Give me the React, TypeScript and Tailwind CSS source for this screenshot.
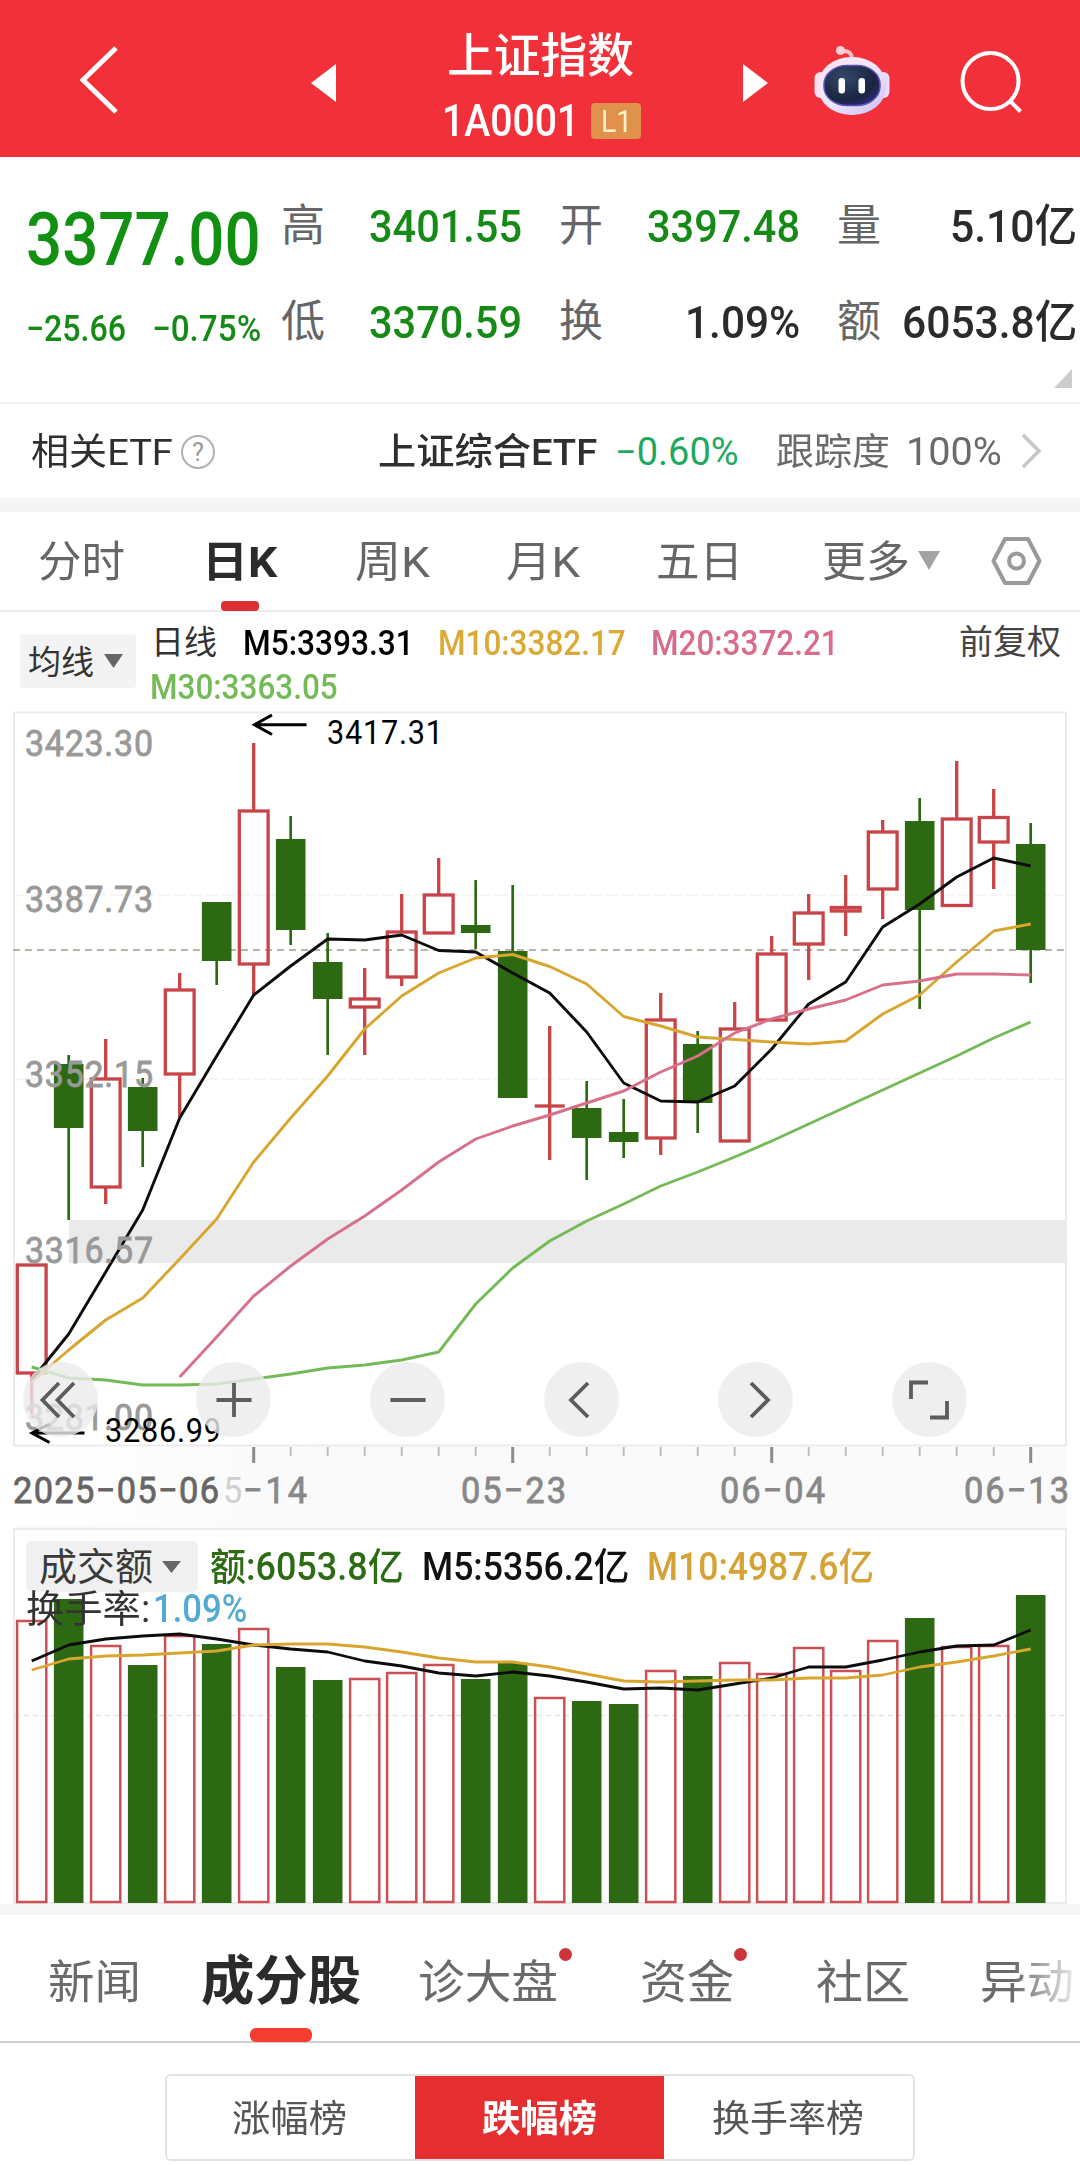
import React, { useLayoutEffect, useRef, useState } from "react";

/** Single line of text, condensed or widened to fill the width of its box. */
function Fit({ className, children }: { className: string; children: React.ReactNode }) {
  const box = useRef<HTMLDivElement>(null);
  const inner = useRef<HTMLSpanElement>(null);
  const [scale, setScale] = useState(1);
  useLayoutEffect(() => {
    if (box.current && inner.current) {
      setScale(box.current.clientWidth / inner.current.offsetWidth);
    }
  }, []);
  return (
    <div ref={box} className={"shrink-0 leading-none " + className}>
      <span ref={inner} className="inline-block origin-left whitespace-nowrap align-top" style={{ transform: `scaleX(${scale})` }}>
        {children}
      </span>
    </div>
  );
}

const UP = "#c94448";
const DOWN = "#2d6812";
const X0 = 31.7;
const STEP = 37;
const cx = (i: number) => X0 + STEP * i;

// [rising, high, bodyTop, bodyBottom, low]
const candles: [number, number, number, number, number][] = [
  [1, 1265, 1265, 1373, 1414],
  [0, 1055, 1064, 1128, 1220],
  [1, 1039, 1079, 1187, 1204],
  [0, 1078, 1087, 1131, 1167],
  [1, 973, 990, 1074, 1117],
  [0, 902, 902, 961, 985],
  [1, 743, 811, 964, 995],
  [0, 816, 839, 930, 945],
  [0, 933, 962, 999, 1055],
  [1, 968, 999, 1007, 1055],
  [1, 894, 932, 977, 986],
  [1, 858, 895, 933, 933],
  [0, 880, 925, 933, 949],
  [0, 885, 951, 1098, 1098],
  [1, 1026, 1106, 1106, 1160],
  [0, 1081, 1108, 1138, 1180],
  [0, 1099, 1132, 1142, 1158],
  [1, 993, 1020, 1138, 1155],
  [0, 1031, 1044, 1103, 1133],
  [1, 1002, 1029, 1141, 1141],
  [1, 936, 954, 1020, 1020],
  [1, 894, 913, 944, 980],
  [1, 875, 907.5, 911, 936],
  [1, 820, 832, 889, 919],
  [0, 798, 821, 910, 1009],
  [1, 761, 819, 905.5, 905.5],
  [1, 789, 817.5, 842, 889],
  [0, 823, 844, 950, 983],
];

const ma5 = [1380, 1334, 1272, 1210, 1118, 1056, 995, 966, 939, 940, 935, 950.5, 952, 973, 993, 1032, 1083, 1101, 1102, 1086, 1049, 1004, 982, 927, 904, 877, 858, 866];
const ma10 = [1382, 1350, 1320, 1298, 1259, 1219, 1162, 1118, 1076, 1029, 996, 973, 958, 954.5, 966.5, 984, 1016.5, 1026, 1037, 1039.5, 1042, 1044, 1041, 1014, 995, 962, 931, 924];
const ma20 = [1377, 1337, 1296, 1266, 1239, 1216, 1190, 1162, 1139, 1126, 1115, 1103, 1091, 1072, 1056, 1033, 1019, 1009, 1000, 985, 981, 974, 974, 975];
const ma30 = [1367, 1378, 1380, 1385, 1385, 1384, 1379, 1374, 1368, 1365, 1360, 1352, 1304, 1268, 1241, 1221, 1204, 1186, 1172, 1157, 1141, 1124, 1107, 1090, 1073, 1056, 1038, 1022];

const volume = [1621, 1599, 1646, 1665, 1636, 1644, 1629, 1667, 1680, 1679, 1673, 1665, 1679, 1663, 1698, 1701, 1704, 1671, 1676, 1663, 1674, 1648, 1671, 1641, 1618, 1647, 1646, 1595];
const vma5 = [1661, 1645, 1639, 1636, 1634, 1639, 1645, 1649, 1652, 1661, 1666, 1673, 1676, 1672, 1676, 1682, 1689, 1688, 1690, 1684, 1678, 1667, 1667, 1660, 1652, 1646, 1645, 1630];
const vma10 = [1670, 1659, 1656, 1655, 1653, 1651, 1645, 1644, 1644, 1647, 1652, 1658, 1662, 1662, 1667, 1674, 1681, 1682, 1681, 1680, 1680, 1678, 1678, 1675, 1667, 1662, 1656, 1649];

const line = (ys: number[], from = 0) => ys.map((y, i) => `${cx(i + from)},${y}`).join(" ");

/** Chart text: glyphs are narrowed a little and then spread over the width w. */
function Label({ x, y, w, size, fill, children }: { x: number; y: number; w: number; size: number; fill: string; children: string }) {
  return (
    <text transform={`translate(${x} ${y}) scale(0.93 1)`} textLength={w / 0.93} lengthAdjust="spacing" fontSize={size} fill={fill}>
      {children}
    </text>
  );
}

function KChart() {
  return (
    <svg className="block" width="1080" height="822" viewBox="0 704 1080 822">
      <defs>
        <linearGradient id="axis" x1="0" x2="1" y1="0" y2="0">
          <stop offset="0" stopColor="#fff" />
          <stop offset="0.3" stopColor="#f9f9f9" />
          <stop offset="1" stopColor="#fafafa" />
        </linearGradient>
      </defs>
      <rect x="14" y="1446" width="1052" height="80" fill="url(#axis)" />
      <rect x="14" y="712.5" width="1052" height="733" fill="none" stroke="#ebebeb" strokeWidth="2" />
      <g stroke="#f4f4f4" strokeWidth="1.5" strokeDasharray="12 4">
        <path d="M15 895H1065M15 1079H1065" />
      </g>
      <rect x="69" y="1220" width="998" height="43" fill="#eaeaea" />
      <path d="M13 950H1066" stroke="#a39a8c" strokeWidth="1.6" strokeDasharray="7 5" />
      {candles.map(([up, h, t, b, l], i) =>
        up ? (
          <g key={i} stroke={UP} strokeWidth="3.3" fill="none">
            <path d={`M${cx(i)} ${h}V${t}M${cx(i)} ${b}V${l}`} />
            {t === b ? <path d={`M${cx(i) - 15} ${t}h30`} /> : <rect x={cx(i) - 14.4} y={t} width="28.8" height={b - t} />}
          </g>
        ) : (
          <g key={i}>
            <path d={`M${cx(i)} ${h}V${l}`} stroke={DOWN} strokeWidth="2.7" />
            <rect x={cx(i) - 14.8} y={t} width="29.6" height={b - t} fill={DOWN} />
          </g>
        )
      )}
      <g fill="none" strokeWidth="2.9" strokeLinejoin="round">
        <polyline points={line(ma5)} stroke="#0c0c0c" />
        <polyline points={line(ma10)} stroke="#d8a62f" />
        <polyline points={line(ma20, 4)} stroke="#d7708a" />
        <polyline points={line(ma30)} stroke="#74bb58" />
      </g>
      <g stroke="#999" strokeWidth="0.8">
        <Label x={25} y={755.5} w={128} size={36.5} fill="#999">3423.30</Label>
        <Label x={25} y={912} w={128} size={36.5} fill="#999">3387.73</Label>
        <Label x={25} y={1087} w={128} size={36.5} fill="#999">3352.15</Label>
        <Label x={25} y={1262.5} w={128} size={36.5} fill="#999">3316.57</Label>
        <Label x={25} y={1430} w={128} size={36.5} fill="#999">3281.00</Label>
      </g>
      <g fill="none" stroke="#000" strokeWidth="3">
        <path d="M306.5 724.7H254M272 715L254.5 724.7L272 734.5" />
        <path d="M84.5 1433H32M49.5 1424L32 1433L49.5 1442.5" />
      </g>
      <Label x={327} y={743.5} w={116} size={33} fill="#000">3417.31</Label>
      <Label x={105} y={1442} w={116} size={33} fill="#000">3286.99</Label>
      {candles.map((_, i) => {
        if (i < 6) return null;
        const major = (i - 6) % 7 === 0;
        return <path key={i} d={`M${cx(i)} 1447v${major ? 16 : 9}`} stroke={major ? "#8c8c8c" : "#bdbdbd"} strokeWidth={major ? 3 : 2} />;
      })}
      <g strokeWidth="0.8">
        <g stroke="#666">
          <Label x={13} y={1502.5} w={206} size={37} fill="#666">2025−05−06</Label>
        </g>
        <Label x={223} y={1502.5} w={20} size={37} fill="#cfcfcf">5</Label>
        <g stroke="#888">
          <Label x={243} y={1502.5} w={64} size={37} fill="#888">−14</Label>
          <Label x={461} y={1502.5} w={105} size={37} fill="#888">05−23</Label>
          <Label x={720} y={1502.5} w={105} size={37} fill="#888">06−04</Label>
          <Label x={964} y={1502.5} w={105} size={37} fill="#888">06−13</Label>
        </g>
      </g>
    </svg>
  );
}

const controls = [
  "M-1 -17L-17.5 0L-1 17M14 -17L-2.5 0L14 17",
  "M-17.5 0H17.5M0 -17V17",
  "M-17.5 0H17.5",
  "M6 -17L-11 0L6 17",
  "M-5 -17L12 0L-5 17",
  "M-18 -1V-17.5H-1M18 1V17.5H1",
];

function VolumeChart() {
  return (
    <svg className="block" width="1080" height="378" viewBox="0 1526 1080 378">
      <rect x="14" y="1524" width="1052" height="5" fill="#fafafa" />
      <rect x="14" y="1529" width="1052" height="374" fill="#fff" stroke="#ebebeb" strokeWidth="2" />
      <path d="M15 1715.5H1065" stroke="#e3e3e3" strokeWidth="1.3" strokeDasharray="5 4" />
      {volume.map((y, i) =>
        candles[i][0] ? (
          <rect key={i} x={cx(i) - 14.6} y={y} width="29.2" height={1902 - y} fill="none" stroke="#cb5056" strokeWidth="2.5" />
        ) : (
          <rect key={i} x={cx(i) - 14.8} y={y} width="29.6" height={1903 - y} fill={DOWN} />
        )
      )}
      <g fill="none" strokeWidth="2.8" strokeLinejoin="round">
        <polyline points={line(vma5)} stroke="#0c0c0c" />
        <polyline points={line(vma10)} stroke="#d8a62f" />
      </g>
    </svg>
  );
}

function Header() {
  return (
    <header className="flex h-[157px] items-start bg-[#f23039] text-white">
      <svg className="ml-[76px] mt-[42px] shrink-0" width="46" height="76" viewBox="0 0 46 76" fill="none" stroke="#fff" strokeWidth="5">
        <path d="M40 6L7 38L40 70" />
      </svg>
      <svg className="ml-[188px] mt-[63px] shrink-0" width="27" height="40" viewBox="0 0 27 40" fill="#fff"><path d="M1 20L26 1V39Z" /></svg>
      <div className="ml-[104px] mt-[32px] flex w-[205px] flex-col">
        <Fit className="ml-[6px] w-[187px] text-[47px] font-medium">上证指数</Fit>
        <div className="mt-[20px] flex items-center">
          <Fit className="ml-[1px] w-[137px] text-[44px] font-medium">1A0001</Fit>
          <div className="ml-[12px] flex h-[36px] w-[50px] items-center justify-center rounded-[4px] bg-[#e0914c] text-[#fff3c9]">
            <Fit className="w-[31px] text-[31px]">L1</Fit>
          </div>
        </div>
      </div>
      <svg className="ml-[96px] mt-[63px] shrink-0" width="27" height="40" viewBox="0 0 27 40" fill="#fff"><path d="M26 20L1 1V39Z" /></svg>
      <svg className="ml-[44px] mt-[42px] shrink-0" width="80" height="76" viewBox="0 0 80 76">
        <defs>
          <linearGradient id="shell" x1="0" y1="0" x2="1" y2="1">
            <stop offset="0" stopColor="#ffe4ea" /><stop offset="0.5" stopColor="#efe6ff" /><stop offset="1" stopColor="#c9bff2" />
          </linearGradient>
          <radialGradient id="visor" cx="0.35" cy="0.3" r="0.8">
            <stop offset="0" stopColor="#34476b" /><stop offset="0.7" stopColor="#1a2540" /><stop offset="1" stopColor="#2c2c7c" />
          </radialGradient>
        </defs>
        <path d="M39 18C39 11 36 8.5 28 9" fill="none" stroke="#ffc4cb" strokeWidth="4" />
        <circle cx="27.5" cy="8.500" r="4.600" fill="#ffd0d6" />
        <rect x="1.500" y="30" width="12" height="26" rx="6" fill="#fbdfee" />
        <rect x="64.500" y="30" width="12" height="26" rx="6" fill="#e9dcfa" />
        <rect x="5" y="15" width="68" height="58" rx="33" ry="28" fill="url(#shell)" />
        <rect x="11" y="23.500" width="56" height="40" rx="23" ry="19" fill="url(#visor)" stroke="#5a52b4" strokeWidth="1.500" />
        <rect x="25.500" y="36" width="6.500" height="15.500" rx="3.200" fill="#fff" />
        <rect x="45.500" y="36" width="6.500" height="15.500" rx="3.200" fill="#fff" />
      </svg>
      <svg className="ml-[63px] mt-[46px] shrink-0" width="70" height="72" viewBox="0 0 70 72" fill="none" stroke="#fff" strokeWidth="4">
        <circle cx="34.500" cy="35" r="28" /><path d="M54 55L64.500 65.500" />
      </svg>
    </header>
  );
}

function Quote() {
  return (
    <section className="flex h-[247px] flex-col border-b-2 border-[#f0f0f0] text-[#2b2b2b]">
      <div className="mt-[32px] flex h-[74px] items-center">
        <Fit className="ml-[26px] mt-[26px] w-[235px] text-[75px] font-medium text-[#119011]">3377.00</Fit>
        <Fit className="ml-[20px] w-[44px] text-[44px] text-[#666]">高</Fit>
        <Fit className="ml-[44px] w-[153px] text-[45px] font-medium text-[#168a16]">3401.55</Fit>
        <Fit className="ml-[37px] w-[44px] text-[44px] text-[#666]">开</Fit>
        <Fit className="ml-[44px] w-[153px] text-[45px] font-medium text-[#168a16]">3397.48</Fit>
        <Fit className="ml-[37px] w-[44px] text-[44px] text-[#666]">量</Fit>
        <Fit className="ml-[69px] w-[127px] text-[45px] font-medium">5.10亿</Fit>
      </div>
      <div className="mt-[22px] flex h-[74px] items-center">
        <Fit className="ml-[26px] mt-[13px] w-[100px] text-[36px] font-medium text-[#168a16]">−25.66</Fit>
        <Fit className="ml-[26px] mt-[13px] w-[109px] text-[36px] font-medium text-[#168a16]">−0.75%</Fit>
        <Fit className="ml-[20px] w-[44px] text-[44px] text-[#666]">低</Fit>
        <Fit className="ml-[44px] w-[153px] text-[45px] font-medium text-[#168a16]">3370.59</Fit>
        <Fit className="ml-[37px] w-[44px] text-[44px] text-[#666]">换</Fit>
        <Fit className="ml-[82px] w-[115px] text-[45px] font-medium">1.09%</Fit>
        <Fit className="ml-[37px] w-[44px] text-[44px] text-[#666]">额</Fit>
        <Fit className="ml-[21px] w-[175px] text-[45px] font-medium">6053.8亿</Fit>
      </div>
      <svg className="ml-[1053px] mt-[9px] shrink-0" width="20" height="21" viewBox="0 0 20 21"><path d="M19 1V20H1Z" fill="#ccc" /></svg>
    </section>
  );
}

function EtfRow() {
  return (
    <section className="flex h-[94px] items-center text-[#2f2f2f] [&>div]:mt-[2px]">
      <Fit className="ml-[31px] w-[142px] text-[37px]">相关ETF</Fit>
      <div className="ml-[8px] flex h-[34px] w-[34px] items-center justify-center rounded-full border-2 border-[#b0b0b0] text-[25px] leading-none text-[#999]">?</div>
      <Fit className="ml-[163px] w-[219px] text-[37px] font-medium">上证综合ETF</Fit>
      <Fit className="ml-[18px] w-[124px] text-[38px] text-[#1fa860]">−0.60%</Fit>
      <Fit className="ml-[37px] w-[114px] text-[37px] text-[#6a6a6a]">跟踪度</Fit>
      <Fit className="ml-[16px] w-[96px] text-[38px] text-[#6a6a6a]">100%</Fit>
      <svg className="ml-[17px] shrink-0" width="24" height="38" viewBox="0 0 24 38" fill="none" stroke="#c6c6c6" strokeWidth="3.500"><path d="M4 3L20 19L4 35" /></svg>
    </section>
  );
}

function PeriodTabs() {
  return (
    <nav className="relative flex h-[100px] items-center border-b-2 border-[#ececec] text-[43px] text-[#666]">
      <Fit className="ml-[38px] mt-[3px] w-[87px]">分时</Fit>
      <Fit className="ml-[77px] mt-[3px] w-[75px] font-bold text-[#2b2b2b]">日K</Fit>
      <Fit className="ml-[78px] mt-[3px] w-[75px]">周K</Fit>
      <Fit className="ml-[76px] mt-[3px] w-[74px]">月K</Fit>
      <Fit className="ml-[76px] mt-[3px] w-[87px]">五日</Fit>
      <Fit className="ml-[79px] mt-[3px] w-[88px]">更多</Fit>
      <svg className="ml-[7px] shrink-0" width="24" height="22" viewBox="0 0 24 22"><path d="M1 1H23L12 20Z" fill="#a3a3a3" /></svg>
      <svg className="ml-[49px] shrink-0" width="54" height="52" viewBox="0 0 54 52" fill="none" stroke="#999" strokeWidth="4" strokeLinejoin="round">
        <path d="M15 4H38L49.500 26L38 48H15L3.500 26Z" /><circle cx="26.500" cy="26" r="7.500" />
      </svg>
      <div className="absolute bottom-[-1px] left-[221px] h-[10px] w-[38px] rounded-[4px] bg-[#dc3035]" />
    </nav>
  );
}

function MaLegend() {
  return (
    <section className="flex h-[92px] items-start text-[34px]">
      <div className="ml-[20px] mt-[22px] flex h-[54px] w-[116px] shrink-0 items-center rounded-[4px] bg-[#f3f3f3] text-[#333]">
        <Fit className="ml-[8px] mt-[2px] w-[66px] text-[33px]">均线</Fit>
        <svg className="ml-[9px] shrink-0" width="22" height="16" viewBox="0 0 22 16"><path d="M1 1H20L10.500 15Z" fill="#666" /></svg>
      </div>
      <div className="ml-[15px] mt-[14px] flex w-[765px] flex-col gap-[9px]">
        <div className="flex">
          <Fit className="w-[66px] text-[33px] text-[#333]">日线</Fit>
          <Fit className="ml-[26px] w-[171px] text-[35px] font-medium text-black">M5:3393.31</Fit>
          <Fit className="ml-[24px] w-[188px] text-[35px] font-medium text-[#dba935]">M10:3382.17</Fit>
          <Fit className="ml-[25px] w-[188px] text-[35px] font-medium text-[#d96c8a]">M20:3372.21</Fit>
        </div>
        <Fit className="-ml-[1px] w-[188px] text-[35px] font-medium text-[#74bb58]">M30:3363.05</Fit>
      </div>
      <Fit className="ml-[43px] mt-[13px] w-[102px] text-[34px] text-[#444]">前复权</Fit>
    </section>
  );
}

function VolumeLegend() {
  return (
    <div className="absolute left-[26px] top-[15px] flex flex-col">
      <div className="flex h-[51px] items-center text-[38px]">
        <div className="flex h-[51px] w-[172px] shrink-0 items-center rounded-[6px] bg-[#f0f0f0] text-[#3a3a3a]">
          <Fit className="ml-[13px] w-[114px]">成交额</Fit>
          <svg className="ml-[8px] shrink-0" width="21" height="14" viewBox="0 0 21 14"><path d="M1 1H20L10.500 13Z" fill="#666" /></svg>
        </div>
        <Fit className="ml-[12px] w-[194px] font-medium text-[#2d6c14]">额:6053.8亿</Fit>
        <Fit className="ml-[18px] w-[207px] font-medium text-[#111]">M5:5356.2亿</Fit>
        <Fit className="ml-[18px] w-[227px] font-medium text-[#d5a235]">M10:4987.6亿</Fit>
      </div>
      <div className="-mt-[2px] flex text-[38px]">
        <Fit className="w-[124px] text-[#333]">换手率:</Fit>
        <Fit className="ml-[3px] w-[94px] font-medium text-[#55aad2]">1.09%</Fit>
      </div>
    </div>
  );
}

function SectionTabs() {
  return (
    <nav className="relative flex h-[128px] items-center border-b-2 border-[#cdcdcd] pt-[8px] text-[46px] text-[#6a6a6a]">
      <Fit className="ml-[48px] w-[93px]">新闻</Fit>
      <Fit className="ml-[60px] w-[160px] text-[53px] font-bold text-[#2b2b2b]">成分股</Fit>
      <div className="relative ml-[57px]">
        <Fit className="w-[140px]">诊大盘</Fit>
        <i className="absolute -top-[11px] right-[-14px] h-[13px] w-[13px] rounded-full bg-[#cf333c]" />
      </div>
      <div className="relative ml-[82px]">
        <Fit className="w-[94px]">资金</Fit>
        <i className="absolute -top-[11px] right-[-13px] h-[13px] w-[13px] rounded-full bg-[#cf333c]" />
      </div>
      <Fit className="ml-[82px] w-[94px]">社区</Fit>
      <Fit className="ml-[70px] w-[94px] [mask-image:linear-gradient(to_right,#000_35%,rgba(0,0,0,0.15)_100%)]">异动</Fit>
      <div className="absolute -bottom-[1px] left-[250px] h-[14px] w-[62px] rounded-[6px] bg-[#f43d31]" />
    </nav>
  );
}

export default function App() {
  return (
    <main className="h-[2165px] w-[1080px] overflow-hidden bg-white font-['Roboto','Noto_Sans_CJK_SC',sans-serif]">
      <Header />
      <Quote />
      <EtfRow />
      <div className="h-[14px] bg-[#f5f5f5]" />
      <PeriodTabs />
      <MaLegend />
      <section className="relative">
        <KChart />
        <div className="absolute left-[22.5px] top-[658px] flex gap-[98.9px]">
          {controls.map((d) => (
            <button key={d} className="flex h-[75px] w-[75px] shrink-0 items-center justify-center rounded-full bg-[#ebebeb]/80">
              <svg width="44" height="44" viewBox="-22 -22 44 44" fill="none" stroke="#5c5c5c" strokeWidth="3.800"><path d={d} /></svg>
            </button>
          ))}
        </div>
      </section>
      <section className="relative">
        <VolumeChart />
        <VolumeLegend />
      </section>
      <div className="h-[11px] bg-[#f6f6f6]" />
      <SectionTabs />
      <div className="mx-auto mt-[31px] flex h-[87px] w-[750px] items-center overflow-hidden rounded-[6px] border-2 border-[#e2e2e2] text-[37px] text-[#555]">
        <div className="mt-[4px] flex w-[246px] justify-center"><Fit className="w-[115px]">涨幅榜</Fit></div>
        <div className="ml-[3px] flex h-[87px] w-[249px] items-center justify-center bg-[#e52e2f] pt-[4px] text-white"><Fit className="w-[115px] font-bold">跌幅榜</Fit></div>
        <div className="mt-[4px] flex w-[250px] justify-center"><Fit className="w-[152px]">换手率榜</Fit></div>
      </div>
    </main>
  );
}
